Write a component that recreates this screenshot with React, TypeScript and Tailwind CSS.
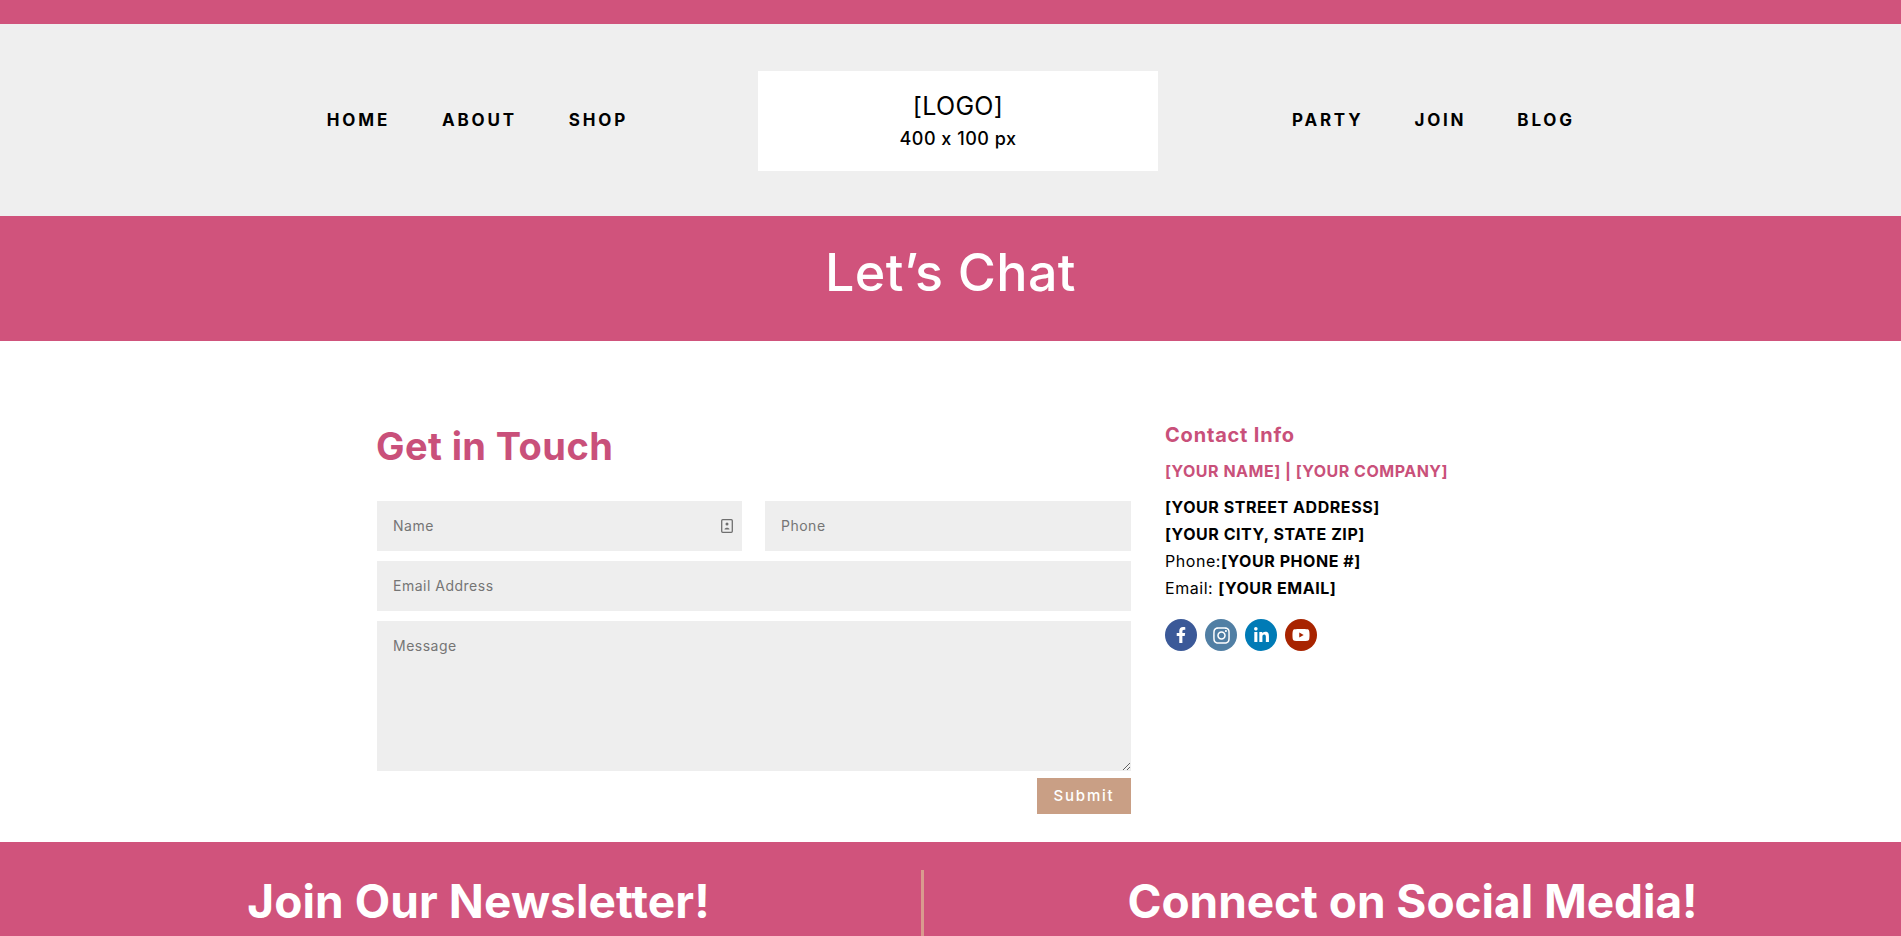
import React from 'react';
import { FaFacebookF, FaInstagram, FaLinkedinIn, FaYoutube } from 'react-icons/fa';

const leftLinks = ['HOME', 'ABOUT', 'SHOP'];
const rightLinks = ['PARTY', 'JOIN', 'BLOG'];

const socials = [
  { name: 'facebook', icon: FaFacebookF, color: 'bg-[#3b5998]', size: 'h-4 w-4' },
  { name: 'instagram', icon: FaInstagram, color: 'bg-[#517fa4]', size: 'h-[19px] w-[19px]' },
  { name: 'linkedin', icon: FaLinkedinIn, color: 'bg-[#007bb6]', size: 'h-[17px] w-[17px]' },
  { name: 'youtube', icon: FaYoutube, color: 'bg-[#a82400]', size: 'h-[18px] w-[18px]' },
];

const NavLink = ({ label }: { label: string }) => (
  <a href="#" className="text-[17px] leading-6 font-bold tracking-[2.8px] text-black">
    {label}
  </a>
);

const fieldClass =
  'h-[50px] bg-[#eeeeee] px-4 pb-px text-sm text-gray-700 tracking-[0.5px] placeholder:text-[#757575] outline-none';

export default function App() {
  return (
    <div className="h-screen overflow-hidden bg-white font-['Inter','Liberation_Sans',sans-serif]">
      <div className="h-6 bg-[#d0537c]" />

      <header className="flex h-[192px] items-center bg-[#efefef]">
        <nav className="flex w-[758px] justify-end gap-[52px] pr-[130px]">
          {leftLinks.map((l) => (
            <NavLink key={l} label={l} />
          ))}
        </nav>
        <div className="mt-px flex h-[100px] w-[400px] flex-col items-center justify-center bg-white pt-px text-black">
          <div className="text-[25px] leading-[36px] tracking-[0.3px]">[LOGO]</div>
          <div className="text-lg leading-[30px] font-medium tracking-[0.5px]">400 x 100 px</div>
        </div>
        <nav className="flex gap-[51px] pl-[134px]">
          {rightLinks.map((l) => (
            <NavLink key={l} label={l} />
          ))}
        </nav>
      </header>

      <section className="flex h-[125px] items-center justify-center bg-[#d0537c] pb-[12px]">
        <h1 className="text-[52px] leading-none font-medium tracking-[0.4px] text-white">Let’s Chat</h1>
      </section>

      <main className="flex h-[501px] pl-[376px] pt-[80px]">
        <div className="w-[755px] pl-px">
          <h2 className="-ml-px text-[38px] leading-[50px] font-bold tracking-[0.4px] text-[#c9507a]">Get in Touch</h2>
          <form className="mt-[30px] flex flex-col gap-[10px]">
            <div className="flex gap-[23px]">
              <div className="relative w-[365px]">
                <input placeholder="Name" className={`${fieldClass} w-full`} />
                <svg viewBox="0 0 12 14" className="absolute right-[9px] top-[18px] h-[14px] w-3" fill="none">
                  <rect x="0.7" y="0.7" width="10.6" height="12.6" rx="1" stroke="#6f6f6f" strokeWidth="1.3" />
                  <circle cx="6" cy="5" r="1.5" fill="#6f6f6f" />
                  <path d="M3.5 10.5 C3.5 8 8.5 8 8.5 10.5 Z" fill="#6f6f6f" />
                </svg>
              </div>
              <input placeholder="Phone" className={`${fieldClass} w-[366px]`} />
            </div>
            <input placeholder="Email Address" className={`${fieldClass} w-[754px]`} />
            <textarea placeholder="Message" className={`${fieldClass} block h-[150px] w-[754px] py-[15px] leading-5`} />
            <div className="-mt-[3px] flex justify-end">
              <button
                type="button"
                className="h-9 w-[94px] bg-[#c99f85] text-[15px] font-medium tracking-[1.8px] text-white"
              >
                Submit
              </button>
            </div>
          </form>
        </div>

        <aside className="ml-[34px]">
          <h3 className="text-[20px] leading-7 font-bold tracking-[0.8px] text-[#c9507a]">Contact Info</h3>
          <p className="mt-2 text-base leading-7 font-bold tracking-[0.5px] text-[#c9507a]">
            [YOUR NAME] | [YOUR COMPANY]
          </p>
          <div className="mt-[9px] text-base leading-[27px] tracking-[0.55px] text-black">
            <p className="font-bold">[YOUR STREET ADDRESS]</p>
            <p className="font-bold">[YOUR CITY, STATE ZIP]</p>
            <p>
              Phone:<span className="font-bold">[YOUR PHONE #]</span>
            </p>
            <p>
              Email: <span className="font-bold">[YOUR EMAIL]</span>
            </p>
          </div>
          <div className="mt-[17px] flex gap-2">
            {socials.map((s) => (
              <a
                key={s.name}
                href="#"
                aria-label={s.name}
                className={`flex h-8 w-8 items-center justify-center rounded-full text-white ${s.color}`}
              >
                <s.icon className={s.size} />
              </a>
            ))}
          </div>
        </aside>
      </main>

      <footer className="flex h-[94px] bg-[#d0537c] pt-7">
        <div className="flex w-[921px] justify-center pl-[36px] pt-[3px]">
          <h2 className="text-[46px] leading-[56px] font-bold tracking-[0.1px] text-white">Join Our Newsletter!</h2>
        </div>
        <div className="h-full w-[3px] bg-[#d99b8e]" />
        <div className="flex flex-1 justify-center pt-[3px]">
          <h2 className="text-[46px] leading-[56px] font-bold tracking-[-0.05px] text-white">Connect on Social Media!</h2>
        </div>
      </footer>
    </div>
  );
}
